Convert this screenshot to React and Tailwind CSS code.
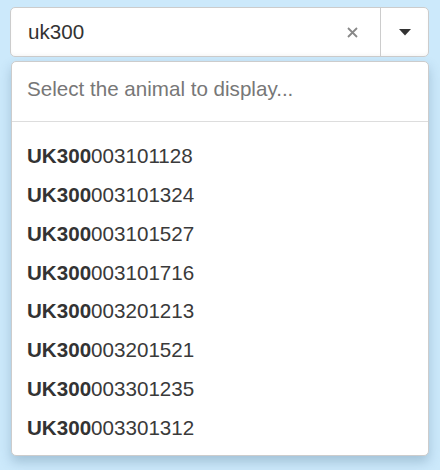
import React from "react";

const animals = [
  "003101128",
  "003101324",
  "003101527",
  "003101716",
  "003201213",
  "003201521",
  "003301235",
  "003301312",
];

const App = () => {
  return (
    <div
      className="w-[440px] h-[470px] bg-[#cce9fb] pt-[7px] pl-[10px] pr-[11px]"
      style={{ fontFamily: '"Liberation Sans", Arial, sans-serif' }}
    >
      {/* Select control */}
      <div className="flex h-[50px] bg-white border border-[#cccccc] rounded-[5px] shadow-[inset_0_-2px_3px_rgba(0,0,0,0.03)]">
        <div className="flex-1 flex items-center pl-[17px] text-[20.6px] text-[#333333]">
          uk300
        </div>
        <div className="w-[56px] flex items-center justify-center text-[#888888]">
          <svg width="11" height="11" viewBox="0 0 11 11">
            <path d="M1 1 L10 10 M10 1 L1 10" stroke="currentColor" strokeWidth="1.8" />
          </svg>
        </div>
        <div className="w-[48px] border-l border-[#cccccc] flex items-center justify-center">
          <svg width="12" height="7" viewBox="0 0 12 7">
            <path d="M0 0 L12 0 L6 6.5 Z" fill="#333333" />
          </svg>
        </div>
      </div>

      {/* Dropdown menu */}
      <div className="mt-[4px] ml-[1px] bg-white border border-[#cccccc] rounded-[5px] shadow-[0_6px_12px_rgba(40,80,110,0.25)]">
        <div className="h-[60px] flex items-center pl-[15px] pb-[4px] text-[20.6px] text-[#777777] border-b border-[#dddddd]">
          Select the animal to display...
        </div>
        <ul className="pt-[15px] pb-[7px]">
          {animals.map((id) => (
            <li
              key={id}
              className="h-[38.86px] flex items-center pl-[15px] text-[20.6px] text-[#333333]"
            >
              <span className="font-bold">UK300</span>
              <span className="text-[#3a3a3a]">{id}</span>
            </li>
          ))}
        </ul>
      </div>
    </div>
  );
};

export default App;
